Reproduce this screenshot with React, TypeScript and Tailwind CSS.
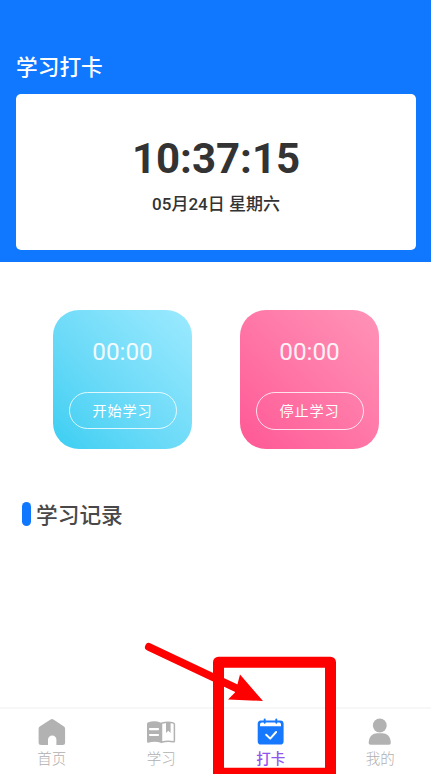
import type { ReactNode } from "react";

interface TimerCardProps {
  label: string;
  className: string;
  buttonClass: string;
}

function TimerCard({ label, className, buttonClass }: TimerCardProps) {
  return (
    <div className={`flex h-[139px] w-[139px] flex-col items-center rounded-[26px] text-white ${className}`}>
      <div className="mt-[24px] text-[24.3px] leading-[36px] opacity-90">00:00</div>
      <button
        className={`mt-[22px] w-[108px] rounded-full border border-white/80 pt-[2px] text-[14.2px] tracking-[0.8px] ${buttonClass}`}
      >
        {label}
      </button>
    </div>
  );
}

function HomeIcon() {
  return (
    <svg width="28" height="28" viewBox="0 0 28 28" fill="#b2b2b2">
      <path d="M12.6 1.400a2.400 2.400 0 0 1 2.800 0l10.200 6.800a3 3 0 0 1 1.500 2.500v13.800a2.500 2.500 0 0 1-2.500 2.500h-6.200v-5.400a4.200 4.200 0 0 0-8.400 0V27H3.100a2.500 2.500 0 0 1-2.500-2.500V10.700a3 3 0 0 1 1.500-2.500z" />
    </svg>
  );
}

function BookIcon() {
  return (
    <svg width="30" height="28" viewBox="0 0 30 28">
      <path d="M1 6Q1 4.600 2.500 4.300Q8.500 2.200 15 4.800V24.800Q8.500 22.800 2.200 24.800Q1 25 1 23.500z" fill="#b2b2b2" />
      <path d="M4 11.200h8M4 17h8" stroke="#fff" strokeWidth="2.200" strokeLinecap="round" />
      <path
        d="M15.500 5.300Q21.500 3.200 27.200 4.900Q28.400 5.100 28.400 6.200V23Q28.400 24 27.200 23.800Q21.500 22.600 15.500 24.200z"
        fill="#fff"
        stroke="#b2b2b2"
        strokeWidth="1.500"
      />
      <path d="M20 4.300h4.600v10.700l-2.300-2.300-2.300 2.300z" fill="#b2b2b2" />
    </svg>
  );
}

function CalendarIcon() {
  return (
    <svg width="28" height="28" viewBox="0 0 28 28">
      <path
        d="M3.800 2.400H6.700V1.500a1 1 0 0 1 2 0v.9h9.600V1.500a1 1 0 0 1 2 0v.9h2.900a3.400 3.400 0 0 1 3.400 3.400v17.400a3.400 3.400 0 0 1-3.400 3.400H4.100a3.400 3.400 0 0 1-3.400-3.400V5.800a3.400 3.400 0 0 1 3.100-3.400z"
        fill="#1677ff"
      />
      <path d="M3 8.200V6.500Q3 4.600 5 4.600h1.600q1.100 2.600 2.200 0h9.400q1.100 2.600 2.200 0h1.600q2 0 2 1.900v1.700z" fill="#fff" />
      <path d="M9.200 16.800l4 3.800 5.900-6.600" fill="none" stroke="#fff" strokeWidth="2" strokeLinecap="round" strokeLinejoin="round" />
    </svg>
  );
}

function UserIcon() {
  return (
    <svg width="28" height="28" viewBox="0 0 28 28" fill="#b2b2b2">
      <circle cx="13.800" cy="7.500" r="6.900" />
      <path d="M2.700 25C2.700 18 7.400 15.200 11 15.200h5.600c3.600 0 8.200 2.800 8.200 9.800q0 1.800-1.800 1.800H4.500q-1.800 0-1.800-1.800z" />
    </svg>
  );
}

const tabs: { name: string; icon: ReactNode; active?: boolean }[] = [
  { name: "首页", icon: <HomeIcon /> },
  { name: "学习", icon: <BookIcon /> },
  { name: "打卡", icon: <CalendarIcon />, active: true },
  { name: "我的", icon: <UserIcon /> },
];

export default function App() {
  return (
    <div className="relative flex h-[774px] w-[431px] flex-col overflow-hidden bg-white font-[Roboto,'Noto_Sans_CJK_SC',sans-serif]">
      <header className="h-[262px] bg-[#1077ff] px-4 pt-[52px]">
        <h1 className="text-[21.7px] leading-[32px] font-medium text-white">学习打卡</h1>
        <div className="mt-[10px] mr-[-1px] flex h-[156px] flex-col items-center rounded-[5px] bg-white text-[#333]">
          <div className="mt-[39px] text-[42px] leading-[52px] font-bold">10:37:15</div>
          <div className="mt-[7px] text-[17px] leading-[24px] font-medium">05月24日 星期六</div>
        </div>
      </header>

      <main className="flex-1">
        <div className="mt-[48px] ml-[53px] flex gap-[48px]">
          <TimerCard label="开始学习" className="bg-linear-to-tr from-[#38cef2] to-[#9beaff]" buttonClass="h-[37px]" />
          <TimerCard label="停止学习" className="bg-linear-to-tr from-[#ff5795] to-[#ff93b8]" buttonClass="h-[38px]" />
        </div>
        <div className="mt-[48px] ml-[22px] flex items-center gap-[5px]">
          <span className="h-[24px] w-[9px] rounded-full bg-[#1077ff]" />
          <h2 className="pt-[4px] text-[21.7px] leading-[30px] font-medium text-[#484848]">学习记录</h2>
        </div>
      </main>

      <nav className="-mr-[4px] -ml-[3px] grid h-[67px] grid-cols-4 border-t-2 border-[#f7f7f7]">
        {tabs.map((tab) => (
          <div key={tab.name} className="flex flex-col items-center pt-[9px]">
            {tab.icon}
            <span
              className={`mt-[3px] text-[14.5px] leading-[21px] ${tab.active ? "font-medium text-[#9254ee]" : "font-light text-[#b0b0b0]"}`}
            >
              {tab.name}
            </span>
          </div>
        ))}
      </nav>

      {/* 标注:红框与箭头 */}
      <svg className="pointer-events-none absolute inset-0" width="431" height="774" viewBox="0 0 431 774">
        <rect x="218.500" y="662.200" width="112" height="111" fill="none" stroke="#fe0000" strokeWidth="11" strokeLinejoin="round" />
        <path d="M149 647L238 689" stroke="#fe0000" strokeWidth="8" strokeLinecap="round" />
        <path d="M263 701L240 674.500L237 686L235 692.500L228 699.500z" fill="#fe0000" />
      </svg>
    </div>
  );
}
